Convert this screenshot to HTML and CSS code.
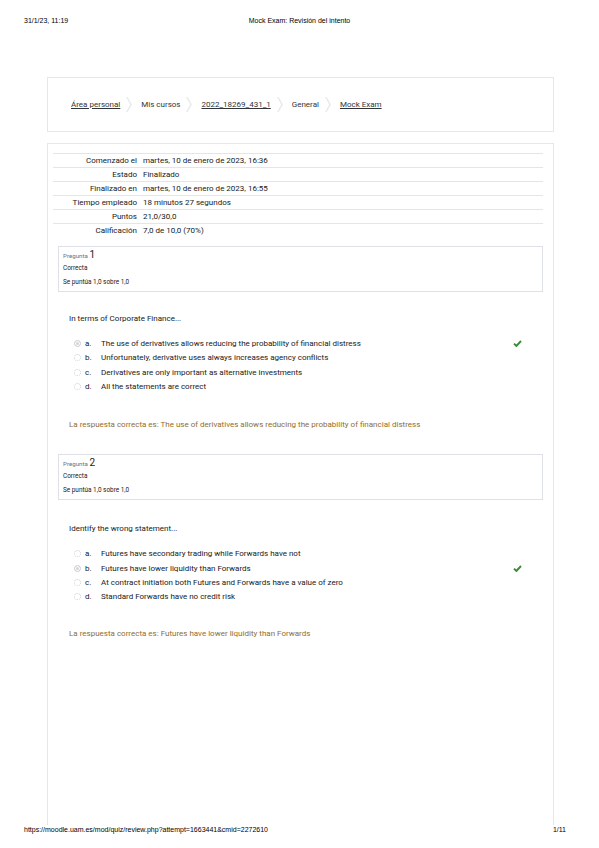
FILE: index.html
```html
<!DOCTYPE html>
<html lang="es">
<head>
    <meta charset="UTF-8">
    <meta name="viewport" content="width=device-width, initial-scale=1.0">
    <title>Mock Exam: Revisión del intento</title>
    <link rel="stylesheet" href="styles.css">
</head>
<body>

    <div class="print-header">
        <span>31/1/23, 11:19</span>
        <span class="print-title">Mock Exam: Revisión del intento</span>
        <span></span>
    </div>

    <div class="page">
        <nav class="breadcrumb-box">
            <a href="#">Área personal</a>
            <svg class="sep" width="6" height="15" viewBox="0 0 6 15"><polygon points="0,0 1.6,0 6,7.5 1.6,15 0,15 4.2,7.5"/></svg>
            <span>Mis cursos</span>
            <svg class="sep" width="6" height="15" viewBox="0 0 6 15"><polygon points="0,0 1.6,0 6,7.5 1.6,15 0,15 4.2,7.5"/></svg>
            <a href="#">2022_18269_431_1</a>
            <svg class="sep" width="6" height="15" viewBox="0 0 6 15"><polygon points="0,0 1.6,0 6,7.5 1.6,15 0,15 4.2,7.5"/></svg>
            <span>General</span>
            <svg class="sep" width="6" height="15" viewBox="0 0 6 15"><polygon points="0,0 1.6,0 6,7.5 1.6,15 0,15 4.2,7.5"/></svg>
            <a href="#">Mock Exam</a>
        </nav>

        <div class="main-box">
            <table class="summary">
                <tr><th>Comenzado el</th><td>martes, 10 de enero de 2023, 16:36</td></tr>
                <tr><th>Estado</th><td>Finalizado</td></tr>
                <tr><th>Finalizado en</th><td>martes, 10 de enero de 2023, 16:55</td></tr>
                <tr><th>Tiempo empleado</th><td>18 minutos 27 segundos</td></tr>
                <tr><th>Puntos</th><td>21,0/30,0</td></tr>
                <tr><th>Calificación</th><td>7,0 de 10,0 (70%)</td></tr>
            </table>

            <!-- Pregunta 1 -->
            <div class="que">
                <div class="info">
                    <h3 class="no">Pregunta <span class="qno">1</span></h3>
                    <div class="state">Correcta</div>
                    <div class="grade">Se puntúa 1,0 sobre 1,0</div>
                </div>
                <div class="content">
                    <div class="qtext">In terms of Corporate Finance...</div>
                    <div class="answer">
                        <div class="opt">
                            <span class="radio checked"></span><span class="letter">a.</span>
                            <span class="txt">The use of derivatives allows reducing the probability of financial distress</span>
                            <svg class="check" width="9" height="7" viewBox="0 0 9 7"><path d="M1 3.6 L3.4 6 L8 1"/></svg>
                        </div>
                        <div class="opt">
                            <span class="radio"></span><span class="letter">b.</span>
                            <span class="txt">Unfortunately, derivative uses always increases agency conflicts</span>
                        </div>
                        <div class="opt">
                            <span class="radio"></span><span class="letter">c.</span>
                            <span class="txt">Derivatives are only important as alternative investments</span>
                        </div>
                        <div class="opt">
                            <span class="radio"></span><span class="letter">d.</span>
                            <span class="txt">All the statements are correct</span>
                        </div>
                    </div>
                    <div class="rightanswer">La respuesta correcta es: The use of derivatives allows reducing the probability of financial distress</div>
                </div>
            </div>

            <!-- Pregunta 2 -->
            <div class="que">
                <div class="info">
                    <h3 class="no">Pregunta <span class="qno">2</span></h3>
                    <div class="state">Correcta</div>
                    <div class="grade">Se puntúa 1,0 sobre 1,0</div>
                </div>
                <div class="content">
                    <div class="qtext">Identify the wrong statement...</div>
                    <div class="answer">
                        <div class="opt">
                            <span class="radio"></span><span class="letter">a.</span>
                            <span class="txt">Futures have secondary trading while Forwards have not</span>
                        </div>
                        <div class="opt">
                            <span class="radio checked"></span><span class="letter">b.</span>
                            <span class="txt">Futures have lower liquidity than Forwards</span>
                            <svg class="check" width="9" height="7" viewBox="0 0 9 7"><path d="M1 3.6 L3.4 6 L8 1"/></svg>
                        </div>
                        <div class="opt">
                            <span class="radio"></span><span class="letter">c.</span>
                            <span class="txt">At contract initiation both Futures and Forwards have a value of zero</span>
                        </div>
                        <div class="opt">
                            <span class="radio"></span><span class="letter">d.</span>
                            <span class="txt">Standard Forwards have no credit risk</span>
                        </div>
                    </div>
                    <div class="rightanswer">La respuesta correcta es: Futures have lower liquidity than Forwards</div>
                </div>
            </div>
        </div>
    </div>

    <div class="print-footer">
        <span>https://moodle.uam.es/mod/quiz/review.php?attempt=1663441&amp;cmid=2272610</span>
        <span>1/11</span>
    </div>

</body>
</html>
```

FILE: styles.css
```css
body {
    margin: 0;
    width: 599px;
    height: 848px;
    overflow: hidden;
    background-color: #fff;
    font-family: Roboto, "Liberation Sans", sans-serif;
    color: #16191c;
}

/* browser print header / footer */
.print-header,
.print-footer {
    font-family: "Liberation Sans", Arial, sans-serif;
    font-size: 7px;
    line-height: 8px;
    color: #000;
}

.print-header {
    display: grid;
    grid-template-columns: 1fr auto 1fr;
    padding: 17px 24px 0;
}

.print-footer {
    display: flex;
    justify-content: space-between;
    padding: 1px 33px 0 24px;
}

.page {
    margin-left: 47px;
    width: 507px;
}

/* breadcrumb */
.breadcrumb-box {
    display: flex;
    align-items: center;
    height: 55px;
    margin-top: 52px;
    padding-left: 23px;
    border: 1px solid #e6e7e8;
    box-sizing: border-box;
    font-size: 8px;
}

.breadcrumb-box a {
    color: #2f353a;
    text-decoration: underline;
}

.breadcrumb-box span {
    color: #2f353a;
}

.sep {
    margin: 0 9px 0 6px;
    fill: #e8eaec;
}

/* main region */
.main-box {
    margin-top: 11px;
    height: 682px;
    box-sizing: border-box;
    padding: 9px 10px 0 5px;
    border: 1px solid #e6e7e8;
    border-bottom: none;
}

.summary {
    width: 100%;
    border-collapse: collapse;
    font-size: 8px;
}

.summary tr {
    height: 14px;
    border-top: 1px solid #e3e5e7;
}

.summary th {
    width: 84px;
    padding: 0 4px 0 0;
    text-align: right;
    font-weight: normal;
    white-space: nowrap;
}

.summary td {
    padding: 0 0 0 2px;
}

/* questions */
.que {
    margin: 8px 0 0 5px;
}

.que + .que {
    margin-top: 24px;
}

.info {
    padding: 2px 4px;
    border: 1px solid #dee2e6;
    font-size: 6.4px;
}

.no {
    margin: 0;
    height: 12px;
    line-height: 12px;
    font-size: 6.2px;
    font-weight: normal;
    color: #6a737b;
}

.qno {
    font-size: 10px;
    color: #1d2125;
}

.state,
.grade {
    line-height: 14px;
}

.content {
    padding: 0 21px 0 11px;
    font-size: 8px;
}

.qtext {
    margin-top: 22px;
    line-height: 10px;
}

.que + .que .qtext {
    margin-top: 24px;
}

.answer {
    margin-top: 13px;
    padding-left: 5px;
}

.opt {
    display: flex;
    align-items: center;
    height: 14.3px;
}

.radio {
    width: 5px;
    height: 5px;
    border: 1px dotted #cfd2d5;
    border-radius: 50%;
    margin-right: 4px;
}

.radio.checked {
    border-style: solid;
    background-color: #d3d5d7;
    box-shadow: inset 0 0 0 1px #fff;
}

.letter {
    width: 16px;
}

.txt {
    flex: 1;
}

.check {
    fill: none;
    stroke: #3a8a3a;
    stroke-width: 1.9;
}

.rightanswer {
    margin-top: 26px;
    line-height: 10px;
    color: #8f6d30;
}

.que + .que .rightanswer {
    margin-top: 25px;
}
```
